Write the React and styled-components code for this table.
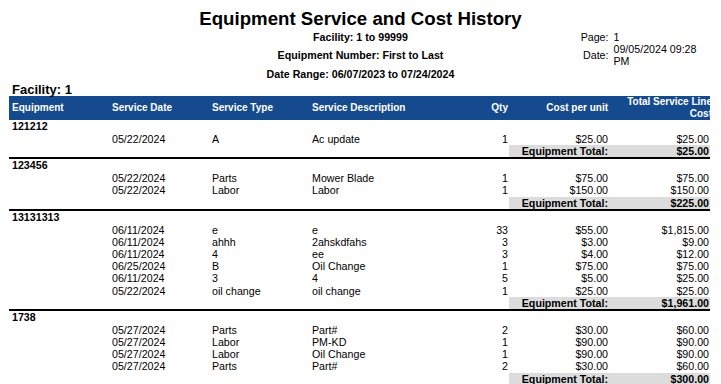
import styled, { createGlobalStyle } from "styled-components";

const GlobalStyle = createGlobalStyle`
    html, body {
        margin: 0;
        padding: 0;
        overflow: hidden;
        background: #fff;
        font-family: "Liberation Sans", Arial, sans-serif;
        color: #000;
    }
`;

const Page = styled.div`
    width: 721px;
`;

const Header = styled.div`
    display: grid;
    grid-template-columns: 1fr 220px 1fr;
    padding-top: 9px;
    height: 74px;
`;

const Title = styled.div`
    grid-column: 1 / -1;
    text-align: center;
    font-size: 18.67px;
    line-height: 19px;
    font-weight: bold;
`;

const Criteria = styled.div`
    grid-column: 2;
    text-align: center;
    font-size: 10.67px;
    font-weight: bold;
    line-height: 18.4px;
`;

const Info = styled.div`
    grid-column: 3;
    margin-left: 110px;
    padding-top: 3px;
    display: grid;
    grid-template-columns: 28px 96px;
    column-gap: 5px;
    align-content: start;
    align-items: center;
    font-size: 10.67px;
    line-height: 12px;
`;

const InfoLabel = styled.div`
    text-align: right;
`;

const FacilityTitle = styled.div`
    padding-left: 12px;
    font-size: 13px;
    font-weight: bold;
    line-height: 13px;
`;

const Report = styled.div`
    margin-left: 9px;
    width: 701px;
    overflow: hidden;
`;

const Row = styled.div`
    display: grid;
    grid-template-columns: repeat(6, 100px) 101px;
    font-size: 10.67px;
    line-height: 12.2px;
`;

const HeadRow = styled(Row)`
    height: 24px;
    align-items: center;
    background: #154a8e;
    color: #fff;
    font-size: 10px;
    font-weight: bold;
    line-height: 12px;
`;

const Cell = styled.div`
    padding: 0 ${(p) => (p.$num ? "1px" : "0")} 0 ${(p) => (p.$num ? "0" : "3px")};
    text-align: ${(p) => (p.$num ? "right" : "left")};
    white-space: nowrap;
`;

const Overhang = styled.div`
    margin-right: -3px;
    text-align: right;
`;

const Group = styled.div`
    border-bottom: 2px solid #000;
`;

const GroupId = styled.div`
    padding-left: 3px;
    font-size: 10.67px;
    font-weight: bold;
    line-height: 13px;
`;

const TotalRow = styled(Row)`
    font-weight: bold;
    line-height: 12px;
`;

const TotalCell = styled(Cell)`
    background: #dcdcdc;
`;

const groups = [
    {
        id: "121212",
        total: "$25.00",
        rows: [["05/22/2024", "A", "Ac update", "1", "$25.00", "$25.00"]],
    },
    {
        id: "123456",
        total: "$225.00",
        rows: [
            ["05/22/2024", "Parts", "Mower Blade", "1", "$75.00", "$75.00"],
            ["05/22/2024", "Labor", "Labor", "1", "$150.00", "$150.00"],
        ],
    },
    {
        id: "13131313",
        total: "$1,961.00",
        rows: [
            ["06/11/2024", "e", "e", "33", "$55.00", "$1,815.00"],
            ["06/11/2024", "ahhh", "2ahskdfahs", "3", "$3.00", "$9.00"],
            ["06/11/2024", "4", "ee", "3", "$4.00", "$12.00"],
            ["06/25/2024", "B", "Oil Change", "1", "$75.00", "$75.00"],
            ["06/11/2024", "3", "4", "5", "$5.00", "$25.00"],
            ["05/22/2024", "oil change", "oil change", "1", "$25.00", "$25.00"],
        ],
    },
    {
        id: "1738",
        total: "$300.00",
        rows: [
            ["05/27/2024", "Parts", "Part#", "2", "$30.00", "$60.00"],
            ["05/27/2024", "Labor", "PM-KD", "1", "$90.00", "$90.00"],
            ["05/27/2024", "Labor", "Oil Change", "1", "$90.00", "$90.00"],
            ["05/27/2024", "Parts", "Part#", "2", "$30.00", "$60.00"],
        ],
    },
];

const App = () => {
    return (
        <Page>
            <GlobalStyle />
            <Header>
                <Title>Equipment Service and Cost History</Title>
                <Criteria>
                    <div>Facility: 1 to 99999</div>
                    <div>Equipment Number: First to Last</div>
                    <div>Date Range: 06/07/2023 to 07/24/2024</div>
                </Criteria>
                <Info>
                    <InfoLabel>Page:</InfoLabel>
                    <div>1</div>
                    <InfoLabel>Date:</InfoLabel>
                    <div>09/05/2024 09:28 PM</div>
                </Info>
            </Header>
            <FacilityTitle>Facility: 1</FacilityTitle>
            <Report>
                <HeadRow>
                    <Cell>Equipment</Cell>
                    <Cell>Service Date</Cell>
                    <Cell>Service Type</Cell>
                    <Cell>Service Description</Cell>
                    <Cell $num>Qty</Cell>
                    <Cell $num>Cost per unit</Cell>
                    <Cell $num>
                        <Overhang>
                            Total Service Line
                            <br />
                            Cost
                        </Overhang>
                    </Cell>
                </HeadRow>
                {groups.map((g) => (
                    <Group key={g.id}>
                        <GroupId>{g.id}</GroupId>
                        {g.rows.map((r, i) => (
                            <Row key={i}>
                                <Cell />
                                <Cell>{r[0]}</Cell>
                                <Cell>{r[1]}</Cell>
                                <Cell>{r[2]}</Cell>
                                <Cell $num>{r[3]}</Cell>
                                <Cell $num>{r[4]}</Cell>
                                <Cell $num>{r[5]}</Cell>
                            </Row>
                        ))}
                        <TotalRow>
                            <Cell />
                            <Cell />
                            <Cell />
                            <Cell />
                            <Cell />
                            <TotalCell $num>Equipment Total:</TotalCell>
                            <TotalCell $num>{g.total}</TotalCell>
                        </TotalRow>
                    </Group>
                ))}
            </Report>
        </Page>
    );
};

export default App;
